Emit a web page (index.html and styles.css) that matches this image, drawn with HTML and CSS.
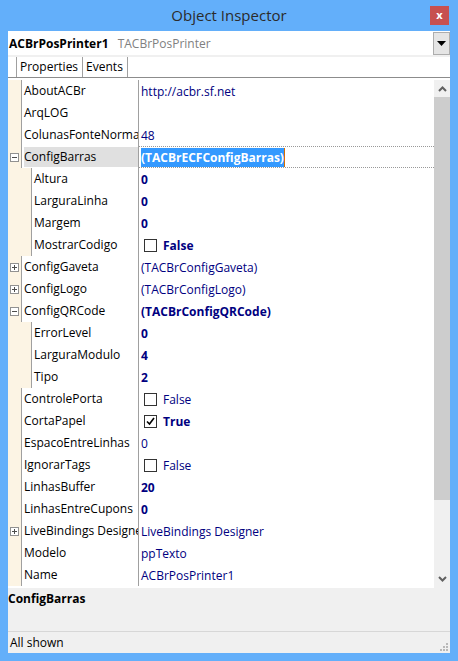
FILE: index.html
```html
<!DOCTYPE html>
<html lang="en">
<head>
  <meta charset="UTF-8">
  <title>Object Inspector</title>
  <link rel="stylesheet" href="styles.css">
</head>
<body>

<div class="win">
  <div class="titlebar">
    <span></span>
    <span class="title">Object Inspector</span>
    <span class="close">x</span>
  </div>

  <div class="client">
    <div class="combo">
      <span class="obj">ACBrPosPrinter1 <span class="cls">TACBrPosPrinter</span></span>
      <span class="drop">
        <svg width="9" height="5" viewBox="0 0 9 5"><path d="M0 0h9L4.5 5z" fill="#000"/></svg>
      </span>
    </div>

    <div class="tabs">
      <span class="tab active">Properties</span>
      <span class="tab">Events</span>
    </div>

    <div class="grid">
      <div class="rows">
        <div class="row"><div class="left"><div class="gut"></div><div class="name">AboutACBr</div></div><div class="val">http://acbr.sf.net</div></div>
        <div class="row"><div class="left"><div class="gut"></div><div class="name">ArqLOG</div></div><div class="val"></div></div>
        <div class="row"><div class="left"><div class="gut"></div><div class="name">ColunasFonteNormal</div></div><div class="val">48</div></div>
        <div class="row sel"><div class="left"><div class="gut"><span class="box"></span></div><div class="name">ConfigBarras</div></div><div class="val"><span class="hl">(TACBrECFConfigBarras)</span></div></div>
        <div class="row kid"><div class="left"><div class="gut"></div><div class="name">Altura</div></div><div class="val b">0</div></div>
        <div class="row kid"><div class="left"><div class="gut"></div><div class="name">LarguraLinha</div></div><div class="val b">0</div></div>
        <div class="row kid"><div class="left"><div class="gut"></div><div class="name">Margem</div></div><div class="val b">0</div></div>
        <div class="row kid"><div class="left"><div class="gut"></div><div class="name">MostrarCodigo</div></div><div class="val b"><span class="chk"></span>False</div></div>
        <div class="row"><div class="left"><div class="gut"><span class="box plus"></span></div><div class="name">ConfigGaveta</div></div><div class="val">(TACBrConfigGaveta)</div></div>
        <div class="row"><div class="left"><div class="gut"><span class="box plus"></span></div><div class="name">ConfigLogo</div></div><div class="val">(TACBrConfigLogo)</div></div>
        <div class="row"><div class="left"><div class="gut"><span class="box"></span></div><div class="name">ConfigQRCode</div></div><div class="val b">(TACBrConfigQRCode)</div></div>
        <div class="row kid"><div class="left"><div class="gut"></div><div class="name">ErrorLevel</div></div><div class="val b">0</div></div>
        <div class="row kid"><div class="left"><div class="gut"></div><div class="name">LarguraModulo</div></div><div class="val b">4</div></div>
        <div class="row kid"><div class="left"><div class="gut"></div><div class="name">Tipo</div></div><div class="val b">2</div></div>
        <div class="row"><div class="left"><div class="gut"></div><div class="name">ControlePorta</div></div><div class="val"><span class="chk"></span>False</div></div>
        <div class="row"><div class="left"><div class="gut"></div><div class="name">CortaPapel</div></div><div class="val b"><span class="chk"><svg width="11" height="11" viewBox="0 0 11 11"><path d="M2 5.5l2.5 2.5L9 2" fill="none" stroke="#000" stroke-width="1.6"/></svg></span>True</div></div>
        <div class="row"><div class="left"><div class="gut"></div><div class="name">EspacoEntreLinhas</div></div><div class="val">0</div></div>
        <div class="row"><div class="left"><div class="gut"></div><div class="name">IgnorarTags</div></div><div class="val"><span class="chk"></span>False</div></div>
        <div class="row"><div class="left"><div class="gut"></div><div class="name">LinhasBuffer</div></div><div class="val b">20</div></div>
        <div class="row"><div class="left"><div class="gut"></div><div class="name">LinhasEntreCupons</div></div><div class="val b">0</div></div>
        <div class="row"><div class="left"><div class="gut"><span class="box plus"></span></div><div class="name">LiveBindings Designer</div></div><div class="val">LiveBindings Designer</div></div>
        <div class="row"><div class="left"><div class="gut"></div><div class="name">Modelo</div></div><div class="val">ppTexto</div></div>
        <div class="row"><div class="left"><div class="gut"></div><div class="name">Name</div></div><div class="val">ACBrPosPrinter1</div></div>
      </div>

      <div class="sb">
        <div class="sb-btn up"><svg width="9" height="6" viewBox="0 0 9 6"><path d="M1 5l3.5-3.5L8 5" fill="none" stroke="#606060" stroke-width="2"/></svg></div>
        <div class="sb-track"><div class="thumb"></div></div>
        <div class="sb-btn down"><svg width="9" height="6" viewBox="0 0 9 6"><path d="M1 1l3.5 3.5L8 1" fill="none" stroke="#606060" stroke-width="2"/></svg></div>
      </div>
    </div>

    <div class="info">ConfigBarras</div>

    <div class="status">
      <span>All shown</span>
      <svg class="grip" width="10" height="10" viewBox="0 0 10 10" fill="#b8b8b8">
        <rect x="7" y="1" width="2" height="2"/>
        <rect x="4" y="4" width="2" height="2"/><rect x="7" y="4" width="2" height="2"/>
        <rect x="1" y="7" width="2" height="2"/><rect x="4" y="7" width="2" height="2"/><rect x="7" y="7" width="2" height="2"/>
      </svg>
    </div>
  </div>
</div>

</body>
</html>
```

FILE: styles.css
```css
* {
  box-sizing: border-box;
}

body {
  margin: 0;
  font-family: "Open Sans", sans-serif;
  font-size: 12px;
  color: #000;
}

.win {
  width: 458px;
  height: 661px;
  background: #63affa;
  padding: 0 8px 8px;
  display: flex;
  flex-direction: column;
}

.titlebar {
  height: 31px;
  display: grid;
  grid-template-columns: 1fr auto 1fr;
  align-items: start;
}

.title {
  font-size: 15px;
  color: #2b2b2b;
  line-height: 31px;
}

.close {
  justify-self: end;
  margin: 6px 1px 0 0;
  width: 19px;
  height: 19px;
  background: #c75050;
  color: #fff;
  font-weight: bold;
  font-size: 11px;
  line-height: 17px;
  text-align: center;
}

.client {
  flex: 1;
  background: #f0f0f0;
  display: flex;
  flex-direction: column;
}

/* combo du composant */
.combo {
  height: 24px;
  background: #fff;
  display: flex;
  align-items: center;
}

.obj {
  flex: 1;
  padding-left: 1px;
  font-weight: bold;
}

.cls {
  color: #808080;
  font-weight: normal;
  margin-left: 6px;
}

.drop {
  align-self: flex-end;
  width: 17px;
  height: 23px;
  background: #e5e5e5;
  border: 1px solid #adadad;
  display: flex;
  align-items: center;
  justify-content: center;
}

.tabs {
  margin-top: 2px;
  height: 21px;
  background: #fff;
  border-bottom: 1px solid #8c8c8c;
  padding-left: 8px;
  display: flex;
}

.tab {
  padding: 0 4px 0 3px;
  line-height: 19px;
  border-right: 1px solid #a0a0a0;
}

.tab.active {
  border-left: 1px solid #a0a0a0;
}

/* grille des propriétés */
.grid {
  height: 510px;
  border-top: 2px solid #fff;
  background: #fff;
  display: flex;
}

.rows {
  flex: 1;
  overflow: hidden;
}

.row {
  height: 22px;
  display: flex;
  line-height: 20px;
}

.left {
  width: 131px;
  display: flex;
  border-right: 1px solid #a0a0a0;
}

.gut {
  width: 14px;
  flex-shrink: 0;
  background: #fcf4e4;
  border-right: 1px solid #a0a0a0;
  display: flex;
  align-items: center;
  justify-content: center;
}

.kid .gut {
  width: 24px;
}

.name {
  flex: 1;
  min-width: 0;
  padding: 1px 0 0 2px;
  white-space: nowrap;
  overflow: hidden;
}

.val {
  flex: 1;
  padding: 1px 0 0 2px;
  color: #000080;
  white-space: nowrap;
  display: flex;
  align-items: center;
}

.val.b {
  font-weight: bold;
}

.box {
  width: 9px;
  height: 9px;
  margin-right: 1px;
  border: 1px solid #919191;
  background: linear-gradient(#4d4d4d, #4d4d4d) center / 5px 1px no-repeat, #fff;
}

.box.plus {
  background: linear-gradient(#4d4d4d, #4d4d4d) center / 5px 1px no-repeat,
              linear-gradient(#4d4d4d, #4d4d4d) center / 1px 5px no-repeat, #fff;
}

.sel .name {
  background: #e0e0e0;
  background-clip: content-box;
  padding: 0;
  border-top: 1px solid #fff;
  border-bottom: 1px solid #fff;
  padding-left: 2px;
  background-origin: border-box;
}

.sel .val {
  border-top: 1px dotted #999;
  border-bottom: 1px dotted #999;
  padding-top: 0;
}

.hl {
  background: #3399ff;
  color: #fff;
  font-weight: bold;
  line-height: 19px;
  border-right: 1px solid #d86e00;
}

.chk {
  width: 13px;
  height: 13px;
  margin: 0 6px 0 3px;
  border: 1px solid #333;
  background: #fff;
  display: flex;
  align-items: center;
  justify-content: center;
}

/* barre de défilement */
.sb {
  width: 16px;
  background: #f0f0f0;
  display: flex;
  flex-direction: column;
}

.sb-btn {
  display: flex;
  align-items: center;
  justify-content: center;
}

.sb-btn.up {
  height: 17px;
}

.sb-btn.down {
  height: 18px;
}

.sb-track {
  flex: 1;
}

.thumb {
  height: 403px;
  background: #cdcdcd;
}

.info {
  height: 44px;
  padding-top: 2px;
  font-weight: bold;
  border-bottom: 1px solid #d7d7d7;
}

.status {
  flex: 1;
  padding: 0 1px 0 2px;
  display: flex;
  align-items: center;
  justify-content: space-between;
}

.grip {
  align-self: flex-end;
  margin-bottom: 1px;
}
```
